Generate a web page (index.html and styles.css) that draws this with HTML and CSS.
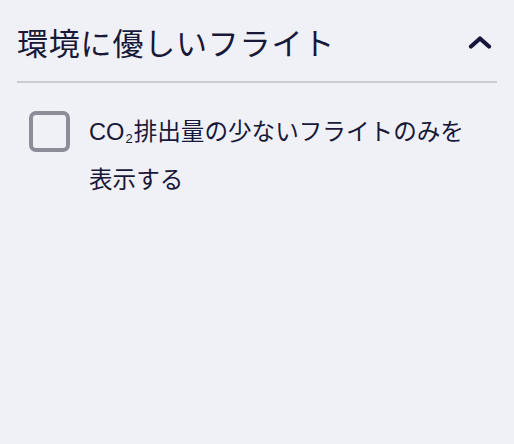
FILE: index.html
```html
<!DOCTYPE html>
<html lang="ja">
<head>
<meta charset="utf-8">
<link rel="stylesheet" href="styles.css">
</head>
<body>
<section class="panel">
  <div class="panel-header">
    <h2 class="panel-title">環境に優しいフライト</h2>
    <svg class="chevron" width="24" height="14" viewBox="0 0 24 14" aria-hidden="true">
      <path d="M3 11.5 L12 3.5 L21 11.5" fill="none" stroke="#16163a" stroke-width="4.2" stroke-linecap="round" stroke-linejoin="round"/>
    </svg>
  </div>
  <label class="option">
    <span class="checkbox"></span>
    <span class="option-text">CO<span class="sub">2</span>排出量の少ないフライトのみを表示する</span>
  </label>
</section>
</body>
</html>
```

FILE: styles.css
```css
html, body {
  margin: 0;
  padding: 0;
  background: #f0f1f7;
}

body {
  font-family: "Noto Sans CJK JP", "Noto Sans", sans-serif;
  color: #181838;
  width: 514px;
  height: 444px;
  overflow: hidden;
}

.panel {
  padding: 0 17px;
}

.panel-header {
  display: flex;
  align-items: center;
  justify-content: space-between;
  padding: 18px 0 15px 0;
  border-bottom: 2px solid #cbccd2;
}

.panel-title {
  margin: 0;
  font-size: 31px;
  font-weight: 400;
  line-height: 48px;
  letter-spacing: 0.8px;
}

.chevron {
  display: block;
  margin-right: 5px;
}

.option {
  display: flex;
  align-items: flex-start;
  gap: 19px;
  padding: 25px 0 0 12px;
}

.checkbox {
  flex: 0 0 auto;
  box-sizing: border-box;
  width: 41px;
  height: 41px;
  margin-top: 3px;
  border: 4.5px solid #8d8d98;
  border-radius: 7px;
}

.option-text {
  width: 392px;
  font-family: "Liberation Sans", "Noto Sans CJK JP", sans-serif;
  font-size: 23.6px;
  line-height: 48px;
}

.sub {
  font-size: 13px;
  line-height: 1;
  vertical-align: -3px;
  margin: 0 1px 0 1px;
}
```
